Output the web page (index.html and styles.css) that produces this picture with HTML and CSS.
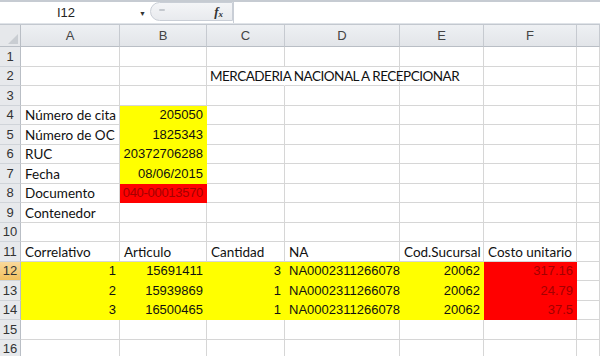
FILE: index.html
```html
<!DOCTYPE html>
<html>
<head>
<meta charset="utf-8">
<link rel="stylesheet" href="styles.css">
</head>
<body>
<div class="fbar">
  <div class="namebox"><span class="ref">I12</span><span class="drop">&#9660;</span></div>
  <div class="pill"><span class="grip"></span><span class="fx">f<sub>x</sub></span></div>
  <div class="input"></div>
</div>
<div class="sheet">
  <div class="corner"><span class="tri"></span></div>
  <div class="ch">A</div><div class="ch">B</div><div class="ch">C</div><div class="ch">D</div><div class="ch">E</div><div class="ch">F</div><div class="ch"></div>

  <div class="rh">1</div><div class="c"></div><div class="c"></div><div class="c"></div><div class="c"></div><div class="c"></div><div class="c"></div><div class="c"></div>
  <div class="rh">2</div><div class="c"></div><div class="c"></div><div class="c over">MERCADERIA NACIONAL A RECEPCIONAR</div><div class="c"></div><div class="c"></div><div class="c"></div><div class="c"></div>
  <div class="rh">3</div><div class="c"></div><div class="c"></div><div class="c"></div><div class="c"></div><div class="c"></div><div class="c"></div><div class="c"></div>
  <div class="rh">4</div><div class="c">Número de cita</div><div class="c y r n">205050</div><div class="c"></div><div class="c"></div><div class="c"></div><div class="c"></div><div class="c"></div>
  <div class="rh">5</div><div class="c">Número de OC</div><div class="c y r n">1825343</div><div class="c"></div><div class="c"></div><div class="c"></div><div class="c"></div><div class="c"></div>
  <div class="rh">6</div><div class="c">RUC</div><div class="c y r n">20372706288</div><div class="c"></div><div class="c"></div><div class="c"></div><div class="c"></div><div class="c"></div>
  <div class="rh">7</div><div class="c">Fecha</div><div class="c y r n">08/06/2015</div><div class="c"></div><div class="c"></div><div class="c"></div><div class="c"></div><div class="c"></div>
  <div class="rh">8</div><div class="c">Documento</div><div class="c red r n tight">040-00013570</div><div class="c"></div><div class="c"></div><div class="c"></div><div class="c"></div><div class="c"></div>
  <div class="rh">9</div><div class="c">Contenedor</div><div class="c"></div><div class="c"></div><div class="c"></div><div class="c"></div><div class="c"></div><div class="c"></div>
  <div class="rh">10</div><div class="c"></div><div class="c"></div><div class="c"></div><div class="c"></div><div class="c"></div><div class="c"></div><div class="c"></div>
  <div class="rh">11</div><div class="c">Correlativo</div><div class="c">Articulo</div><div class="c">Cantidad</div><div class="c">NA</div><div class="c">Cod.Sucursal</div><div class="c">Costo unitario</div><div class="c"></div>
  <div class="rh sel">12</div><div class="c y r n">1</div><div class="c y r n">15691411</div><div class="c y r n">3</div><div class="c y n">NA0002311266078</div><div class="c y r n">20062</div><div class="c red r n">317.16</div><div class="c"></div>
  <div class="rh">13</div><div class="c y r n">2</div><div class="c y r n">15939869</div><div class="c y r n">1</div><div class="c y n">NA0002311266078</div><div class="c y r n">20062</div><div class="c red r n">24.79</div><div class="c"></div>
  <div class="rh">14</div><div class="c y r n">3</div><div class="c y r n">16500465</div><div class="c y r n">1</div><div class="c y n">NA0002311266078</div><div class="c y r n">20062</div><div class="c red r n">37.5</div><div class="c"></div>
  <div class="rh">15</div><div class="c"></div><div class="c"></div><div class="c"></div><div class="c"></div><div class="c"></div><div class="c"></div><div class="c"></div>
  <div class="rh">16</div><div class="c"></div><div class="c"></div><div class="c"></div><div class="c"></div><div class="c"></div><div class="c"></div><div class="c"></div>
</div>
</body>
</html>
```
FILE: styles.css
```css
html, body {
  margin: 0;
  padding: 0;
  background: #fff;
  overflow: hidden;
}
body {
  width: 600px;
  height: 356px;
  font-family: Lato, "Open Sans", sans-serif;
}
.fbar {
  height: 21px;
  display: flex;
  border-top: 2px solid #c6cbd2;
  border-bottom: 1px solid #dfe3e8;
  background: #fff;
}
.namebox {
  width: 150px;
  position: relative;
  display: flex;
  align-items: center;
}
.ref {
  font-family: "Liberation Sans", Arial, sans-serif;
  font-size: 13px;
  color: #222;
  margin-left: 57px;
}
.drop {
  font-size: 7px;
  color: #333;
  margin-left: 64px;
}
.pill {
  width: 83px;
  height: 19px;
  box-sizing: border-box;
  border: 1px solid #c9ced6;
  border-radius: 10px 0 0 10px;
  background: linear-gradient(#f4f5f7, #e8eaee);
  display: flex;
  align-items: center;
  justify-content: space-between;
  padding: 0 9px 0 8px;
}
.grip {
  width: 6px;
  height: 2px;
  background: #c4c8ce;
  border-radius: 1px;
  margin-top: -4px;
}
.fx {
  font-family: "Liberation Serif", serif;
  font-style: italic;
  font-weight: bold;
  font-size: 13px;
  color: #333;
}
.fx sub {
  font-size: 9px;
  vertical-align: -1px;
}
.input {
  flex: 1;
  border-left: 1px solid #c9ced6;
}
.sheet {
  display: grid;
  grid-template-columns: 21px 99px 87px 78px 115px 84px 93px 23px;
  grid-template-rows: 22px repeat(16, 19.5px);
  border-top: 1px solid #c3c8cf;
}
.corner {
  background: #e6e8eb;
  border-right: 1px solid #b9bec5;
  border-bottom: 1px solid #b9bec5;
  position: relative;
}
.tri {
  position: absolute;
  right: 2px;
  bottom: 2px;
  width: 0;
  height: 0;
  border-left: 10px solid transparent;
  border-bottom: 10px solid #c9cdd2;
}
.ch {
  background: linear-gradient(#eef0f3, #e2e5e9);
  border-right: 1px solid #c6cad0;
  border-bottom: 1px solid #b9bec5;
  display: flex;
  align-items: center;
  justify-content: center;
  font-family: "Liberation Sans", Arial, sans-serif;
  font-size: 13px;
  color: #444;
}
.rh {
  background: #e7e9ec;
  border-right: 1px solid #b9bec5;
  border-bottom: 1px solid #d0d4d9;
  display: flex;
  align-items: center;
  justify-content: center;
  font-family: "Liberation Sans", Arial, sans-serif;
  font-size: 13px;
  color: #333;
  box-sizing: border-box;
}
.rh.sel {
  background: linear-gradient(#f9d99b, #f1c15f);
  color: #333;
}
.c {
  border-right: 1px solid #d6d6d6;
  border-bottom: 1px solid #d6d6d6;
  font-size: 13.5px;
  color: #111;
  display: flex;
  align-items: flex-end;
  padding: 0 3px 1px 4px;
  white-space: nowrap;
  box-sizing: border-box;
  min-width: 0;
}
.c.over {
  overflow: visible;
  position: relative;
  z-index: 1;
  border-right-color: transparent;
  letter-spacing: -0.5px;
  padding-left: 3px;
}
.c.r {
  justify-content: flex-end;
}
.c.y {
  background: #ffff00;
  border-color: #ffff00;
}
.c.red {
  background: #ff0000;
  border-color: #ff0000;
  color: #a30000;
}
.c.n {
  font-family: "Liberation Sans", Arial, sans-serif;
  font-size: 13px;
  padding-bottom: 2px;
}
.c.tight {
  padding-left: 2px;
  padding-right: 3px;
  letter-spacing: -0.3px;
}
```
